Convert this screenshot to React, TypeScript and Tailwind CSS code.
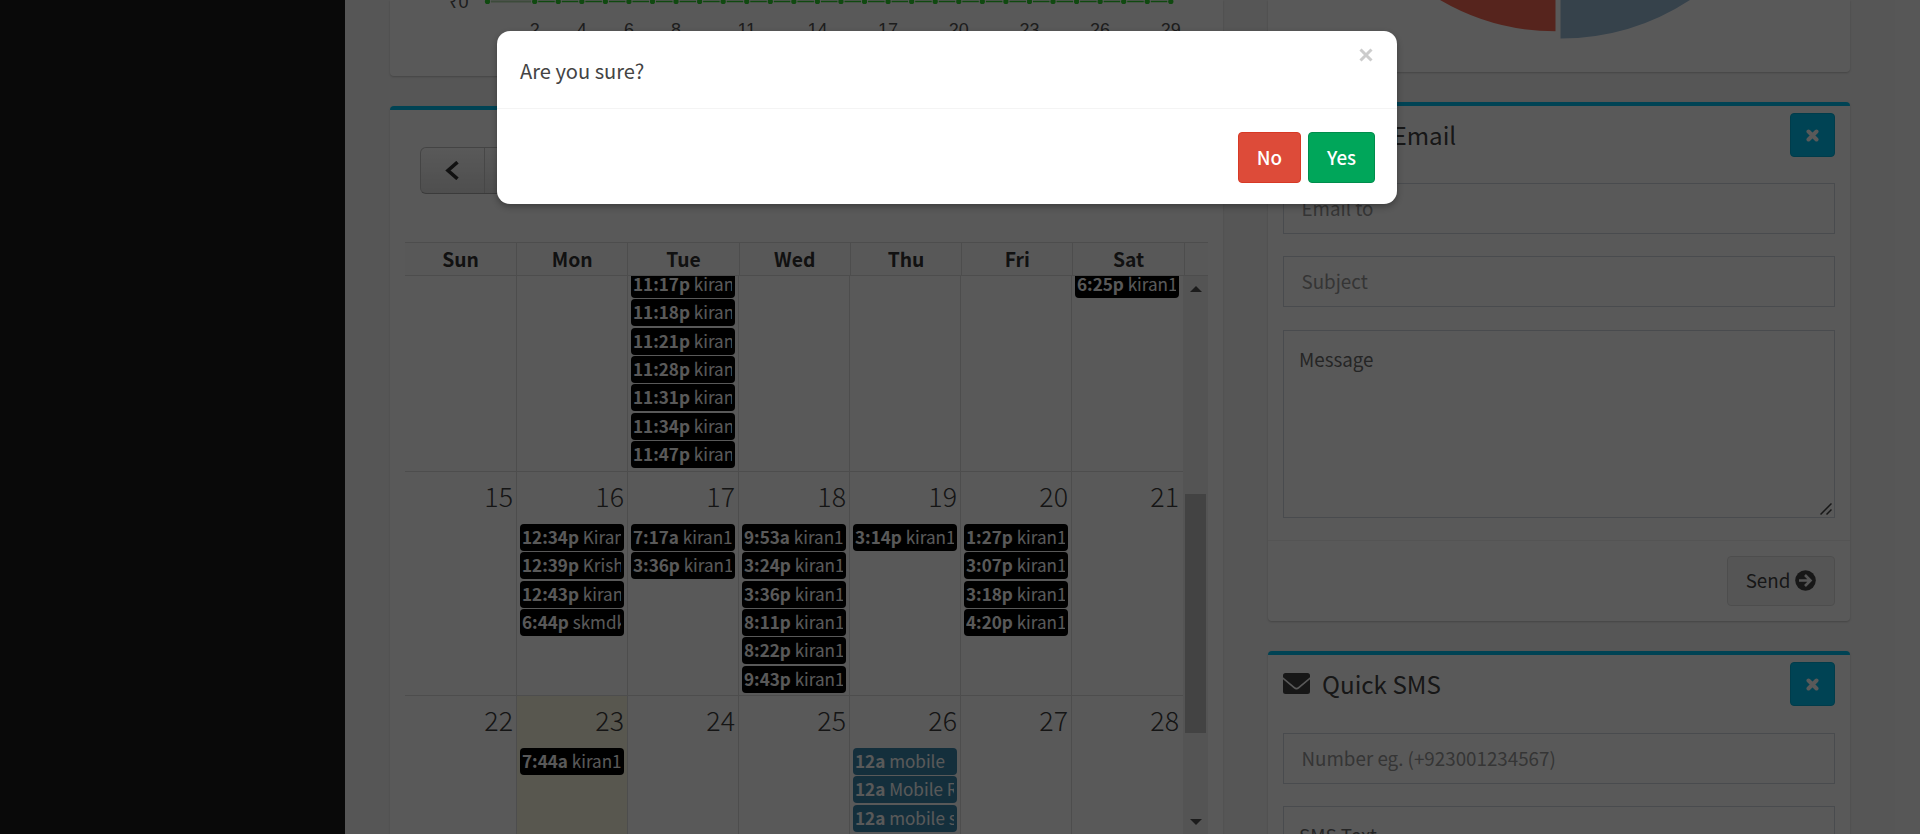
import React from "react";

type Ev = { t: string; n: string };

const days = ["Sun", "Mon", "Tue", "Wed", "Thu", "Fri", "Sat"];

const week1: Ev[][] = [
  [],
  [],
  [
    { t: "11:17p", n: "kiran1" },
    { t: "11:18p", n: "kiran1" },
    { t: "11:21p", n: "kiran1" },
    { t: "11:28p", n: "kiran1" },
    { t: "11:31p", n: "kiran1" },
    { t: "11:34p", n: "kiran1" },
    { t: "11:47p", n: "kiran1" },
  ],
  [],
  [],
  [],
  [{ t: "6:25p", n: "kiran1" }],
];

const week2: Ev[][] = [
  [],
  [
    { t: "12:34p", n: "Kiran" },
    { t: "12:39p", n: "Krishna" },
    { t: "12:43p", n: "kiran1" },
    { t: "6:44p", n: "skmdk" },
  ],
  [
    { t: "7:17a", n: "kiran1" },
    { t: "3:36p", n: "kiran1" },
  ],
  [
    { t: "9:53a", n: "kiran1" },
    { t: "3:24p", n: "kiran1" },
    { t: "3:36p", n: "kiran1" },
    { t: "8:11p", n: "kiran1" },
    { t: "8:22p", n: "kiran1" },
    { t: "9:43p", n: "kiran1" },
  ],
  [{ t: "3:14p", n: "kiran1" }],
  [
    { t: "1:27p", n: "kiran1" },
    { t: "3:07p", n: "kiran1" },
    { t: "3:18p", n: "kiran1" },
    { t: "4:20p", n: "kiran1" },
  ],
  [],
];

const week3: Ev[][] = [
  [],
  [{ t: "7:44a", n: "kiran1" }],
  [],
  [],
  [
    { t: "12a", n: "mobile" },
    { t: "12a", n: "Mobile R" },
    { t: "12a", n: "mobile s" },
  ],
  [],
  [],
];

function Event({ ev, blue }: { ev: Ev; blue?: boolean }) {
  return (
    <div
      className={`h-[27px] shrink-0 rounded-[4px] pl-[2px] pr-[3px] ${blue ? "bg-[#3a87ad]" : "bg-black"}`}
    >
      <div className="h-[27px] overflow-hidden whitespace-nowrap text-[17.100px] leading-[26px] text-white">
        <span className="font-bold">{ev.t}</span> {ev.n}
      </div>
    </div>
  );
}

function Week({
  start,
  cells,
  today,
  blueDay,
  className,
}: {
  start?: number;
  cells: Ev[][];
  today?: number;
  blueDay?: number;
  className: string;
}) {
  return (
    <div className={`flex shrink-0 ${className}`}>
      {cells.map((evs, i) => (
        <div
          key={i}
          className={`min-w-0 border-[#dddddd] ${i === 0 ? "w-[111px]" : "w-[111px] border-l"} ${
            today === i ? "bg-[#fcf8e3]" : ""
          }`}
        >
          {start !== undefined && (
            <div className="h-[52px] pr-[3px] text-right text-[26.800px] font-extralight leading-[47px] text-[#3c3c3c]">
              {start + i}
            </div>
          )}
          <div className="flex flex-col gap-[1.350px] pl-[3px] pr-[3px]">
            {evs.map((e, k) => (
              <Event key={k} ev={e} blue={blueDay === i} />
            ))}
          </div>
        </div>
      ))}
    </div>
  );
}

function Envelope() {
  return (
    <svg className="h-[21px] w-[27px]" viewBox="0 0 27 21">
      <path
        fill="#444444"
        d="M2.5 0h22A2.5 2.5 0 0 1 27 2.5v1.7L15.2 14a2.6 2.6 0 0 1-3.4 0L0 4.200V2.500A2.500 2.500 0 0 1 2.500 0zM0 6.200l10.700 9a4.300 4.300 0 0 0 5.600 0L27 6.200V18.500A2.500 2.500 0 0 1 24.500 21h-22A2.500 2.500 0 0 1 0 18.500z"
      />
    </svg>
  );
}

function CardHead({ title }: { title: string }) {
  return (
    <div className="flex h-[77px] items-start justify-between px-[15px]">
      <div className="flex items-start gap-3 pt-[18px]">
        <Envelope />
        <h3 className="-mt-[7px] text-[24.200px] leading-[35px] text-[#444444]">{title}</h3>
      </div>
      <button className="mt-[7px] flex h-[44px] w-[45px] items-center justify-center rounded-[4px] border border-[#00acd6] bg-[#00c0ef]">
        <svg className="h-[13px] w-[13px]" viewBox="0 0 13 13">
          <path d="M2.500 2.500l8 8M10.500 2.500l-8 8" stroke="#fff" strokeWidth="4" strokeLinecap="round" />
        </svg>
      </button>
    </div>
  );
}

const labels = [2, 4, 6, 8, 11, 14, 17, 20, 23, 26, 29];
const dotX = (d: number) => 534.7 + (d - 2) * 23.56 - 390;

function Chart() {
  return (
    <svg className="h-[76px] w-[833px]" viewBox="0 0 833 76">
      <path d="M101 1.500H141" stroke="#b0d8a8" strokeWidth="2" />
      {Array.from({ length: 27 }, (_, k) => (
        <path key={k} d={`M${dotX(k + 2) + 3.5} 1.500H${dotX(k + 3) - 3.5}`} stroke="#2fd02f" strokeWidth="1.500" />
      ))}
      <circle cx="97.500" cy="1.500" r="2.600" fill="#2fd02f" />
      {Array.from({ length: 28 }, (_, k) => (
        <circle key={k} cx={dotX(k + 2)} cy="1.500" r="2.600" fill="#2fd02f" />
      ))}
      <g fill="#545454" fontFamily="Liberation Sans, Arial, sans-serif" fontSize="18">
        <text x="58.500" y="8">₹0</text>
        {labels.map((l) => (
          <text key={l} x={dotX(l)} y="36" textAnchor="middle">
            {l}
          </text>
        ))}
      </g>
    </svg>
  );
}

function Calendar() {
  return (
    <div className="mt-[30px] h-[900px] rounded-t-[4px] border-t-4 border-[#00c0ef] bg-white px-[15px] shadow-[0_1px_2px_rgba(0,0,0,0.15)]">
      <div className="flex h-[132px] pl-[15px] pt-[37px]">
        <div className="flex h-[47px] w-[129px] rounded-[6px] border border-[#c4c4c4] border-b-[#a8a8a8] bg-linear-to-b from-white to-[#e0e0e0]">
          <div className="flex w-[64px] items-center justify-center border-r border-[#cccccc] pr-[2px]">
            <svg className="h-[19px] w-[14px]" viewBox="0 0 14 19">
              <path d="M12.500 1.200L3 9.500L12.500 17.800" stroke="#333" strokeWidth="3.600" fill="none" />
            </svg>
          </div>
        </div>
      </div>
      <div className="flex h-[34px] border-y border-[#dddddd] bg-[#fcfcfc]">
        {days.map((d, i) => (
          <div
            key={d}
            className={`text-center text-[19.300px] font-bold leading-[33px] text-[#333333] ${
              i === 0 ? "w-[111px]" : "w-[111.300px] border-l border-[#dddddd]"
            }`}
          >
            {d}
          </div>
        ))}
        <div className="flex-1 border-l border-[#dddddd]" />
      </div>
      <div className="flex h-[558px] overflow-hidden">
        <div className="flex w-[778px] shrink-0 flex-col">
          <div className="flex h-[195px] shrink-0 flex-col justify-end overflow-hidden">
            <Week cells={week1} className="h-[200px]" />
          </div>
          <Week start={15} cells={week2} className="h-[224px] border-t border-[#dddddd]" />
          <Week start={22} cells={week3} today={1} blueDay={4} className="h-[160px] border-t border-[#dddddd]" />
        </div>
        <div className="flex w-[25px] shrink-0 flex-col items-center bg-[#f1f1f1] pt-[10px]">
          <svg className="h-[6px] w-[12px]" viewBox="0 0 12 6">
            <path d="M0 6L6 0L12 6z" fill="#505050" />
          </svg>
          <div className="mt-[202px] h-[239px] w-[21px] bg-[#c1c1c1]" />
          <svg className="mt-[86px] h-[6px] w-[12px]" viewBox="0 0 12 6">
            <path d="M0 0L6 6L12 0z" fill="#505050" />
          </svg>
        </div>
      </div>
    </div>
  );
}

function Field({ text }: { text: string }) {
  return (
    <div className="mb-[22px] h-[51px] border border-[#d2d6de] pl-[17.500px] text-[18.800px] leading-[47px] text-[#999999]">
      {text}
    </div>
  );
}

export default function App() {
  return (
    <div className="relative h-[834px] w-[1920px] overflow-hidden font-['Noto_Sans_CJK_SC',sans-serif]">
      <div className="flex h-[834px] w-full overflow-hidden">
        <aside className="w-[345px] shrink-0 bg-[#1a1a1a]" />
        <main className="flex w-[1550px] shrink-0 gap-[45px] bg-[#f5f5f5] pl-[45px]">
          <section className="w-[833px]">
            <div className="h-[76px] rounded-b-[4px] bg-white shadow-[0_1px_2px_rgba(0,0,0,0.2)]">
              <Chart />
            </div>
            <Calendar />
          </section>
          <section className="w-[582px]">
            <div className="h-[72px] rounded-b-[4px] bg-white shadow-[0_1px_2px_rgba(0,0,0,0.2)]">
              <svg className="h-[72px] w-[582px]" viewBox="0 0 582 72">
                <path d="M172 0A229 229 0 0 0 287.500 31.300V0z" fill="#f56954" />
                <path d="M292.500 0V38.500A237 237 0 0 0 422 0z" fill="#9bbdd8" />
              </svg>
            </div>
            <div className="mt-[30px] h-[519px] rounded-[4px] border-t-4 border-[#00c0ef] bg-white shadow-[0_1px_2px_rgba(0,0,0,0.2)]">
              <CardHead title="Quick Email" />
              <div className="h-[357px] px-[15px]">
                <Field text="Email to" />
                <Field text="Subject" />
                <div className="mt-[23px] flex h-[188px] items-end justify-between border border-[#d2d6de] pl-[15px]">
                  <div className="self-start pt-[13px] text-[18.800px] leading-[30px] text-[#6b6b6b]">Message</div>
                  <svg className="mb-[2px] mr-[2px] h-[12px] w-[12px]" viewBox="0 0 12 12">
                    <path d="M0.500 11.500L11.500 0.500M6.500 11.500L11.500 6.500" stroke="#444" strokeWidth="1.500" />
                  </svg>
                </div>
              </div>
              <div className="flex h-[81px] justify-end border-t border-[#f1f1f1] pr-[15px] pt-[15px]">
                <button className="flex h-[50px] w-[108px] items-center justify-center gap-[5px] rounded-[4px] border border-[#dddddd] bg-[#f4f4f4] pb-[2px] text-[18.800px] leading-none text-[#444444]">
                  <span>Send</span>
                  <svg className="h-[21px] w-[21px]" viewBox="0 0 21 21">
                    <circle cx="10.500" cy="10.500" r="10.300" fill="#444" />
                    <path d="M4 10.500H15M10 5L15.500 10.500L10 16" stroke="#f4f4f4" strokeWidth="2.600" fill="none" />
                  </svg>
                </button>
              </div>
            </div>
            <div className="mt-[30px] h-[400px] rounded-[4px] border-t-4 border-[#00c0ef] bg-white shadow-[0_1px_2px_rgba(0,0,0,0.2)]">
              <CardHead title="Quick SMS" />
              <div className="px-[15px] pt-px">
                <Field text="Number eg. (+923001234567)" />
                <div className="h-[188px] border border-[#d2d6de] pl-[15px] pt-[13px] text-[18.800px] leading-[30px] text-[#6b6b6b]">
                  SMS Text
                </div>
              </div>
            </div>
          </section>
        </main>
        <div className="flex-1 bg-[#fafafa]" />
      </div>

      <div className="absolute inset-0 flex items-start bg-black/65 pl-[497px] pt-[31px]">
        <div className="h-[173px] w-[900px] rounded-[13px] bg-white shadow-[0_3px_6px_rgba(0,0,0,0.3)]">
          <div className="flex h-[78px] items-start justify-between border-b-[1.500px] border-[#f4f4f4] pl-[23px] pr-[24px]">
            <p className="pt-[24px] text-[20.100px] leading-[32px] text-[#444444]">Are you sure?</p>
            <svg className="mt-[17px] h-[14px] w-[14px]" viewBox="0 0 14 14">
              <path d="M1.500 1.500l11 11M12.500 1.500l-11 11" stroke="#cccccc" strokeWidth="3" />
            </svg>
          </div>
          <div className="flex justify-end gap-[7px] pr-[22px] pt-[23px]">
            <button className="h-[50.500px] w-[63px] rounded-[4px] border border-[#d73925] bg-[#dd4b39] text-[18.800px] font-medium leading-[46px] text-white">
              No
            </button>
            <button className="h-[50.500px] w-[67px] rounded-[4px] border border-[#008d4c] bg-[#00a65a] text-[18.800px] font-medium leading-[46px] text-white">
              Yes
            </button>
          </div>
        </div>
      </div>
    </div>
  );
}
